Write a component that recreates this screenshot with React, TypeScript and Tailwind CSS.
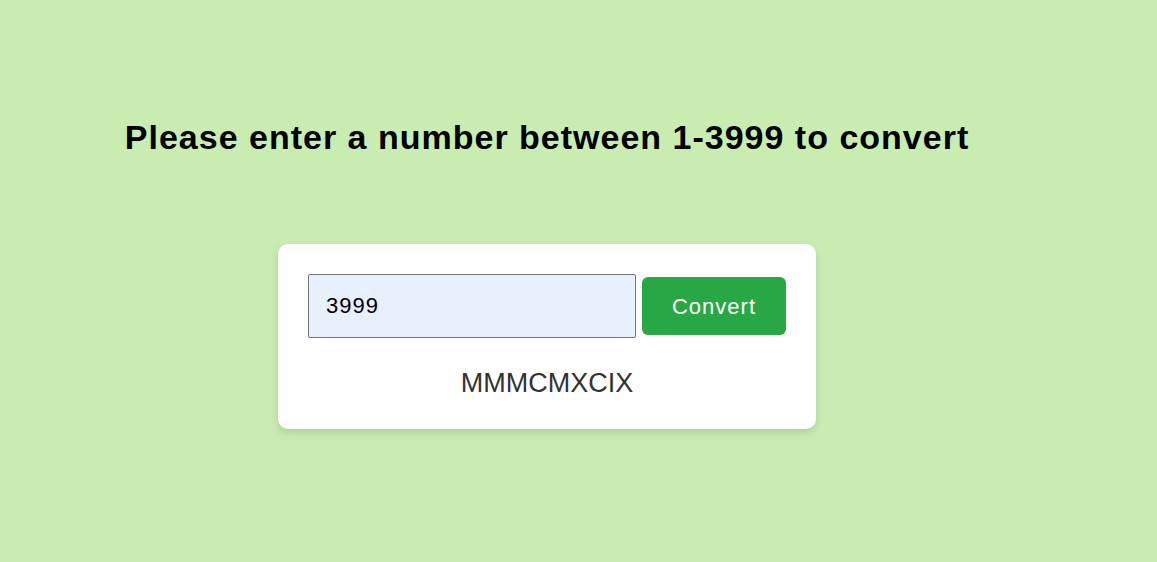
import { useState } from 'react';

const toRoman = (n: number) => {
    const table: [number, string][] = [
        [1000, 'M'], [900, 'CM'], [500, 'D'], [400, 'CD'],
        [100, 'C'], [90, 'XC'], [50, 'L'], [40, 'XL'],
        [10, 'X'], [9, 'IX'], [5, 'V'], [4, 'IV'], [1, 'I'],
    ];
    let out = '';
    for (const [v, s] of table) {
        while (n >= v) {
            out += s;
            n -= v;
        }
    }
    return out;
};

export default function App() {
    const [value, setValue] = useState('3999');
    const [result, setResult] = useState(toRoman(3999));

    const handleConvert = () => {
        const n = parseInt(value, 10);
        if (isNaN(n) || n < 1 || n > 3999) {
            setResult('Invalid number');
            return;
        }
        setResult(toRoman(n));
    };

    return (
        <div className="min-h-[562px] w-full bg-[#c9edb1] font-['Liberation_Sans',Arial,sans-serif]">
            <div className="flex w-[1094px] flex-col items-center">
                <h1 className="mt-[118px] text-[34px] font-bold leading-[39px] tracking-[1px] text-black">
                    Please enter a number between 1-3999 to convert
                </h1>
                <div className="mt-[87px] w-[538px] rounded-[10px] bg-white px-[30px] pt-[30px] pb-[30px] shadow-[0_4px_8px_rgba(0,0,0,0.12)]">
                    <div className="flex items-center gap-[6px]">
                        <input
                            type="text"
                            value={value}
                            onChange={(e) => setValue(e.target.value)}
                            className="h-[64px] w-[328px] rounded-[2px] border border-[#767676] bg-[#e8f0fe] px-[17px] text-[22px] tracking-[1px] text-black outline-none"
                        />
                        <button
                            onClick={handleConvert}
                            className="h-[58px] w-[144px] rounded-[6px] bg-[#28a745] text-[22px] tracking-[1px] text-white"
                        >
                            Convert
                        </button>
                    </div>
                    <p className="mt-[30px] text-center text-[27px] leading-[31px] text-[#333333]">{result}</p>
                </div>
            </div>
        </div>
    );
}
